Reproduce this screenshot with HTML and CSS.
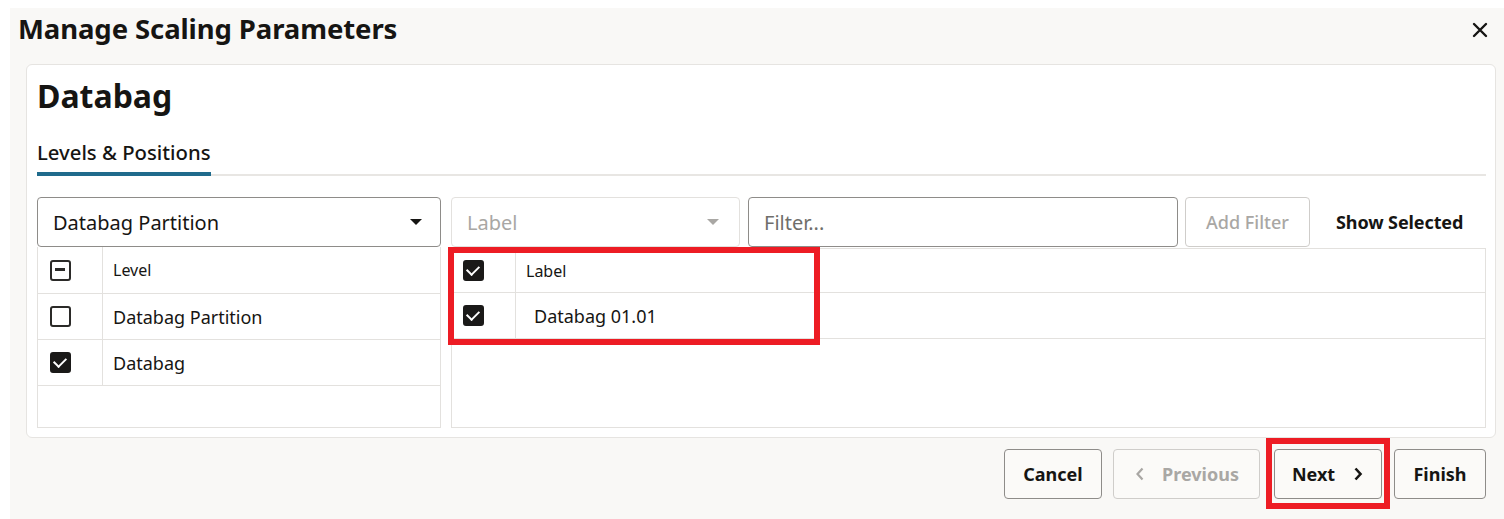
FILE: index.html
```html
<!DOCTYPE html>
<html lang="en">
<head>
<meta charset="utf-8">
<title>Manage Scaling Parameters</title>
<link rel="stylesheet" href="styles.css">
</head>
<body>
<div class="dialog">
  <div class="dlg-header">
    <h1 class="dlg-title">Manage Scaling Parameters</h1>
    <button class="close-btn" aria-label="Close">
      <svg width="16" height="16" viewBox="0 0 16 16"><path d="M2 2 L14 14 M14 2 L2 14" stroke="#161513" stroke-width="2.4" stroke-linecap="round"/></svg>
    </button>
  </div>
  <div class="card">
    <h2 class="card-title">Databag</h2>
    <div class="tabs"><div class="tab selected">Levels &amp; Positions</div></div>
    <div class="workspace">
      <div class="left-col">
        <div class="select">
          <span class="select-value">Databag Partition</span>
          <span class="caret"></span>
        </div>
        <div class="grid left-grid">
          <div class="row hdr">
            <div class="cell chk"><span class="cb indet"></span></div>
            <div class="cell txt small">Level</div>
          </div>
          <div class="row">
            <div class="cell chk"><span class="cb"></span></div>
            <div class="cell txt">Databag Partition</div>
          </div>
          <div class="row">
            <div class="cell chk"><span class="cb checked"></span></div>
            <div class="cell txt">Databag</div>
          </div>
        </div>
      </div>
      <div class="right-col">
        <div class="toolbar">
          <div class="select disabled label-select">
            <span class="select-value">Label</span>
            <span class="caret"></span>
          </div>
          <div class="filter-input">Filter...</div>
          <button class="add-filter">Add Filter</button>
          <button class="show-selected">Show Selected</button>
        </div>
        <div class="grid right-grid">
          <div class="row hdr r-hdr">
            <div class="cell chk r-chk"><span class="cb checked"></span></div>
            <div class="cell txt small">Label</div>
          </div>
          <div class="row r-row">
            <div class="cell chk r-chk"><span class="cb checked"></span></div>
            <div class="cell txt indent">Databag 01.01</div>
          </div>
        </div>
      </div>
    </div>
  </div>
  <div class="footer">
    <button class="btn btn-cancel">Cancel</button>
    <button class="btn btn-prev" disabled>
      <svg width="12" height="16" viewBox="0 0 12 16"><path d="M8.5 2.5 L3.5 8 L8.5 13.5" fill="none" stroke="#a9a7a4" stroke-width="2.2"/></svg>
      <span>Previous</span>
    </button>
    <button class="btn btn-next">
      <span>Next</span>
      <svg width="12" height="16" viewBox="0 0 12 16"><path d="M3.5 2.5 L8.5 8 L3.5 13.5" fill="none" stroke="#161513" stroke-width="2.6"/></svg>
    </button>
    <button class="btn btn-finish">Finish</button>
  </div>
</div>
<div class="annot annot-grid"></div>
<div class="annot annot-next"></div>
</body>
</html>
```

FILE: styles.css
```css
* { box-sizing: border-box; }
html, body { margin: 0; padding: 0; background: #ffffff; }
body {
  font-family: "Noto Sans", "Open Sans", sans-serif;
  color: #161513;
  width: 1504px;
  height: 519px;
  overflow: hidden;
  position: relative;
}
.dialog {
  margin: 8px 0 0 10px;
  height: 511px;
  background: #f9f8f6;
  display: flex;
  flex-direction: column;
}
.dlg-header {
  display: flex;
  justify-content: space-between;
  align-items: flex-start;
  height: 56px;
  padding: 3px 16px 0 8px;
}
.dlg-title {
  margin: 0;
  font-size: 27.5px;
  line-height: 36px;
  font-weight: 700;
  letter-spacing: -0.1px;
}
.close-btn {
  border: 0;
  background: transparent;
  padding: 0;
  margin-top: 11px;
  width: 16px;
  height: 16px;
  display: flex;
}
.card {
  margin: 0 8px 0 16px;
  background: #ffffff;
  border: 1px solid #e6e4e1;
  border-radius: 6px;
  padding: 11px 9px 9px 10px;
}
.card-title {
  margin: 0;
  font-size: 32px;
  line-height: 40px;
  font-weight: 700;
}
.tabs {
  margin-top: 24px;
  border-bottom: 2px solid #e8e6e3;
  display: flex;
}
.tab {
  font-size: 20.3px;
  line-height: 24px;
  font-weight: 500;
  padding-bottom: 8px;
  border-bottom: 4px solid #1f6b8c;
  margin-bottom: -2px;
}
.workspace {
  margin-top: 21px;
  display: flex;
  gap: 10px;
}
.left-col { width: 404px; flex: none; display: flex; flex-direction: column; }
.right-col { flex: 1; display: flex; flex-direction: column; }
.select {
  height: 50px;
  border: 1px solid #8e8c89;
  border-radius: 4px;
  display: flex;
  align-items: center;
  justify-content: space-between;
  padding: 0 18px 0 15px;
  font-size: 20px;
}
.caret {
  width: 0; height: 0;
  border-left: 6px solid transparent;
  border-right: 6px solid transparent;
  border-top: 6px solid #161513;
}
.select.disabled { border-color: #e3e1de; color: #a9a7a4; }
.select.disabled .caret { border-top-color: #a9a7a4; }
.grid {
  border: 1px solid #e3e1de;
  flex: 1;
  display: flex;
  flex-direction: column;
}
.left-grid { border-top: 0; height: 181px; flex: none; }
.row {
  display: flex;
  height: 46px;
  border-bottom: 1px solid #e3e1de;
}
.left-grid .hdr { height: 47px; }
.cell { display: flex; align-items: center; }
.chk {
  width: 65px;
  flex: none;
  padding-left: 12px;
  border-right: 1px solid #e3e1de;
}
.txt { padding-left: 10px; font-size: 18px; }
.txt.small { font-size: 16px; }
.txt.indent { padding-left: 18px; }
.cb {
  width: 21px;
  height: 21px;
  border: 2.5px solid #2b2a28;
  border-radius: 3px;
  position: relative;
  display: block;
}
.cb.checked { background: #1a1918; border-color: #1a1918; }
.cb.checked::after {
  content: "";
  position: absolute;
  left: 4px; top: 1px;
  width: 6px; height: 10px;
  border-right: 2.5px solid #ffffff;
  border-bottom: 2.5px solid #ffffff;
  transform: rotate(45deg);
}
.cb.indet::after {
  content: "";
  position: absolute;
  left: 3px; top: 6.5px;
  width: 10px; height: 2.5px;
  background: #2b2a28;
}
.toolbar {
  display: flex;
  height: 50px;
  align-items: stretch;
}
.label-select { width: 289px; flex: none; padding-right: 20px; }
.filter-input {
  width: 430px;
  margin-left: 8px;
  border: 1px solid #8e8c89;
  border-radius: 4px;
  display: flex;
  align-items: center;
  padding-left: 15px;
  font-size: 20px;
  color: #6f6e6b;
}
.add-filter {
  margin-left: 7px;
  width: 125px;
  border: 1px solid #cfcdca;
  border-radius: 4px;
  background: #ffffff;
  font-family: inherit;
  font-size: 18px;
  font-weight: 500;
  color: #a9a7a4;
  padding: 0;
}
.show-selected {
  margin-left: 12px;
  border: 0;
  background: transparent;
  font-family: inherit;
  font-size: 18px;
  font-weight: 700;
  color: #161513;
  padding: 0 14px;
  letter-spacing: -0.1px;
}
.right-grid { margin-top: 1px; }
.r-hdr { height: 44px; }
.r-chk { width: 64px; padding-left: 11px; }
.footer {
  display: flex;
  justify-content: flex-end;
  padding: 11px 18px 0 0;
}
.btn {
  height: 50px;
  border: 1px solid #8e8c89;
  border-radius: 4px;
  background: #fbfaf8;
  font-family: inherit;
  font-size: 18px;
  font-weight: 700;
  color: #161513;
  display: flex;
  align-items: center;
  justify-content: center;
  padding: 0;
}
.btn-cancel { width: 98px; }
.btn-prev {
  width: 147px;
  margin-left: 11px;
  border-color: #cfcdca;
  color: #a9a7a4;
  gap: 16px;
}
.btn-next { width: 108px; margin-left: 14px; gap: 17px; }
.btn-finish { width: 92px; margin-left: 12px; }
.annot {
  position: absolute;
  border: 6px solid #ed1c24;
  pointer-events: none;
}
.annot-grid { left: 448px; top: 247px; width: 372px; height: 98px; }
.annot-next { left: 1266px; top: 438px; width: 124px; height: 71px; }
```
